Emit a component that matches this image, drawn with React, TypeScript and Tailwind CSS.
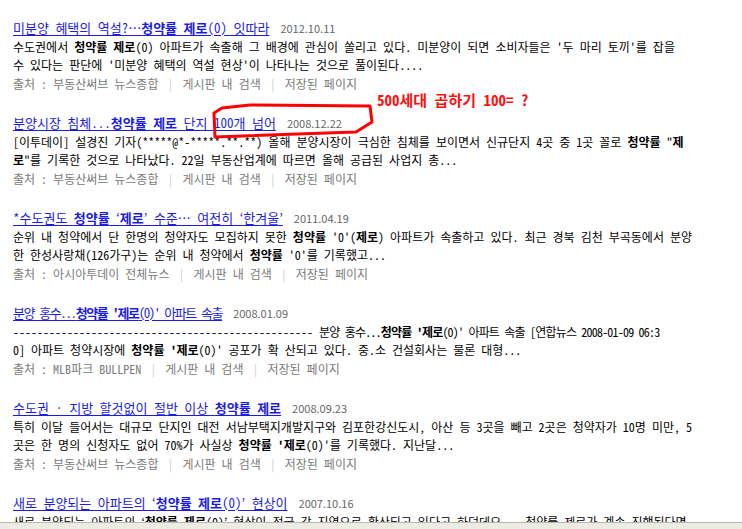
import React from 'react';

type Seg = string | { b: string } | { t: Seg[] } | { tt: Seg[] };

type Item = {
  title: Seg[];
  date: string;
  lines: Seg[][];
  source: string;
};

const dashes = '-'.repeat(50);

const items: Item[] = [
  {
    title: ['미분양 혜택의 역설?…', { b: '청약률 제로' }, '(0) 잇따라'],
    date: '2012.10.11',
    lines: [
      ['수도권에서 ', { b: '청약률 제로' }, "(0) 아파트가 속출해 그 배경에 관심이 쏠리고 있다. 미분양이 되면 소비자들은 '두 마리 토끼'를 잡을"],
      ["수 있다는 판단에 '미분양 혜택의 역설 현상'이 나타나는 것으로 풀이된다...."],
    ],
    source: '부동산써브 뉴스종합',
  },
  {
    title: ['분양시장 침체...', { b: '청약률 제로' }, ' 단지 100개 넘어'],
    date: '2008.12.22',
    lines: [
      ['[이투데이] 설경진 기자(*****@*-*****.**.**) 올해 분양시장이 극심한 침체를 보이면서 신규단지 4곳 중 1곳 꼴로 ', { b: '청약률' }, ' "', { b: '제' }],
      [{ b: '로' }, '"를 기록한 것으로 나타났다. 22일 부동산업계에 따르면 올해 공급된 사업지 총...'],
    ],
    source: '부동산써브 뉴스종합',
  },
  {
    title: ['*수도권도 ', { b: '청약률' }, ' ‘', { b: '제로' }, '’ 수준… 여전히 ‘한겨울’'],
    date: '2011.04.19',
    lines: [
      ['순위 내 청약에서 단 한명의 청약자도 모집하지 못한 ', { b: '청약률' }, " '0'(", { b: '제로' }, ') 아파트가 속출하고 있다. 최근 경북 김천 부곡동에서 분양'],
      ['한 한성사랑채(126가구)는 순위 내 청약에서 ', { b: '청약률' }, " '0'를 기록했고..."],
    ],
    source: '아시아투데이 전체뉴스',
  },
  {
    title: [{ tt: ['분양 홍수...', { b: "청약률 '제로" }, "(0)' 아파트 속출"] }],
    date: '2008.01.09',
    lines: [
      [dashes + ' ', { t: ['분양 홍수...', { b: "청약률 '제로" }, "(0)' 아파트 속출 [연합뉴스 2008-01-09 06:3"] }],
      ['0] 아파트 청약시장에 ', { b: "청약률 '제로" }, "(0)' 공포가 확 산되고 있다. 중.소 건설회사는 물론 대형..."],
    ],
    source: 'MLB파크 BULLPEN',
  },
  {
    title: ['수도권 · 지방 할것없이 절반 이상 ', { b: '청약률 제로' }],
    date: '2008.09.23',
    lines: [
      ['특히 이달 들어서는 대규모 단지인 대전 서남부택지개발지구와 김포한강신도시, 아산 등 3곳을 빼고 2곳은 청약자가 10명 미만, 5'],
      ['곳은 한 명의 신청자도 없어 70%가 사실상 ', { b: "청약률 '제로" }, "(0)'를 기록했다. 지난달..."],
    ],
    source: '부동산써브 뉴스종합',
  },
  {
    title: ['새로 분양되는 아파트의 ‘', { b: '청약률 제로' }, '(0)’ 현상이'],
    date: '2007.10.16',
    lines: [
      ['새로 분양되는 아파트의 ‘', { b: '청약률 제로' }, '(0)’ 현상이 전국 각 지역으로 확산되고 있다고 하던데요... 청약률 제로가 계속 진행된다면'],
    ],
    source: '부동산써브 뉴스종합',
  },
];

const renderSegs = (segs: Seg[]): React.ReactNode =>
  segs.map((s, i) => {
    if (typeof s === 'string') return <span key={i}>{s}</span>;
    if ('b' in s)
      return (
        <b key={i} className="font-bold">
          {s.b}
        </b>
      );
    if ('tt' in s)
      return (
        <span key={i} className="tracking-[-1.4px]">
          {renderSegs(s.tt)}
        </span>
      );
    return (
      <span key={i} className="tracking-[-0.8px]">
        {renderSegs(s.t)}
      </span>
    );
  });

const Result = ({ item }: { item: Item }) => (
  <div className="mb-[19px]">
    {/* 제목 + 날짜 */}
    <div className="h-[20px] leading-[20px] whitespace-nowrap">
      <a href="#" className="text-[13px] text-[#1c1ce0] underline underline-offset-2">
        {renderSegs(item.title)}
      </a>
      <span
        className="ml-[11px] text-[11px] text-[#666666]"
        style={{ fontFamily: '"Noto Sans CJK KR", sans-serif' }}
      >
        {item.date}
      </span>
    </div>
    {/* 본문 요약 */}
    {item.lines.map((line, i) => (
      <div key={i} className="h-[18px] leading-[18px] whitespace-nowrap text-black">
        {renderSegs(line)}
      </div>
    ))}
    {/* 출처 */}
    <div className="h-[20px] leading-[20px] whitespace-nowrap text-[#7a7a7a]">
      출처 : {item.source}
      <span className="mx-[9px] text-[#d0d0d0]">|</span>
      게시판 내 검색
      <span className="mx-[9px] text-[#d0d0d0]">|</span>
      저장된 페이지
    </div>
  </div>
);

export default function App() {
  return (
    <div
      className="relative w-[742px] h-[529px] overflow-hidden bg-white flex flex-col text-[12px]"
      style={{ fontFamily: '"Noto Sans Mono CJK KR", "Noto Sans CJK KR", sans-serif' }}
    >
      <div className="flex-1 overflow-hidden pl-[13px] pt-[18px]">
        {items.map((it, i) => (
          <Result key={i} item={it} />
        ))}
      </div>

      {/* 하단 상태바 */}
      <div className="h-[7px] shrink-0 border-t border-[#b9b9b0] bg-[#ecebe4]" />

      {/* 빨간 손글씨 표시 */}
      <svg
        className="absolute left-0 top-0 pointer-events-none"
        width="742"
        height="529"
        viewBox="0 0 742 529"
      >
        <path
          d="M250 105 L370 106 L372 122 L356 132 L215 137 L214 113 L222 108 L250 105"
          fill="none"
          stroke="#ff0000"
          strokeWidth="3"
          strokeLinejoin="round"
        />
      </svg>
      <div className="absolute left-[377px] top-[91px] text-[15px] leading-[18px] font-bold text-[#ff1010] whitespace-nowrap">
        500세대 곱하기 100= ?
      </div>
    </div>
  );
}
